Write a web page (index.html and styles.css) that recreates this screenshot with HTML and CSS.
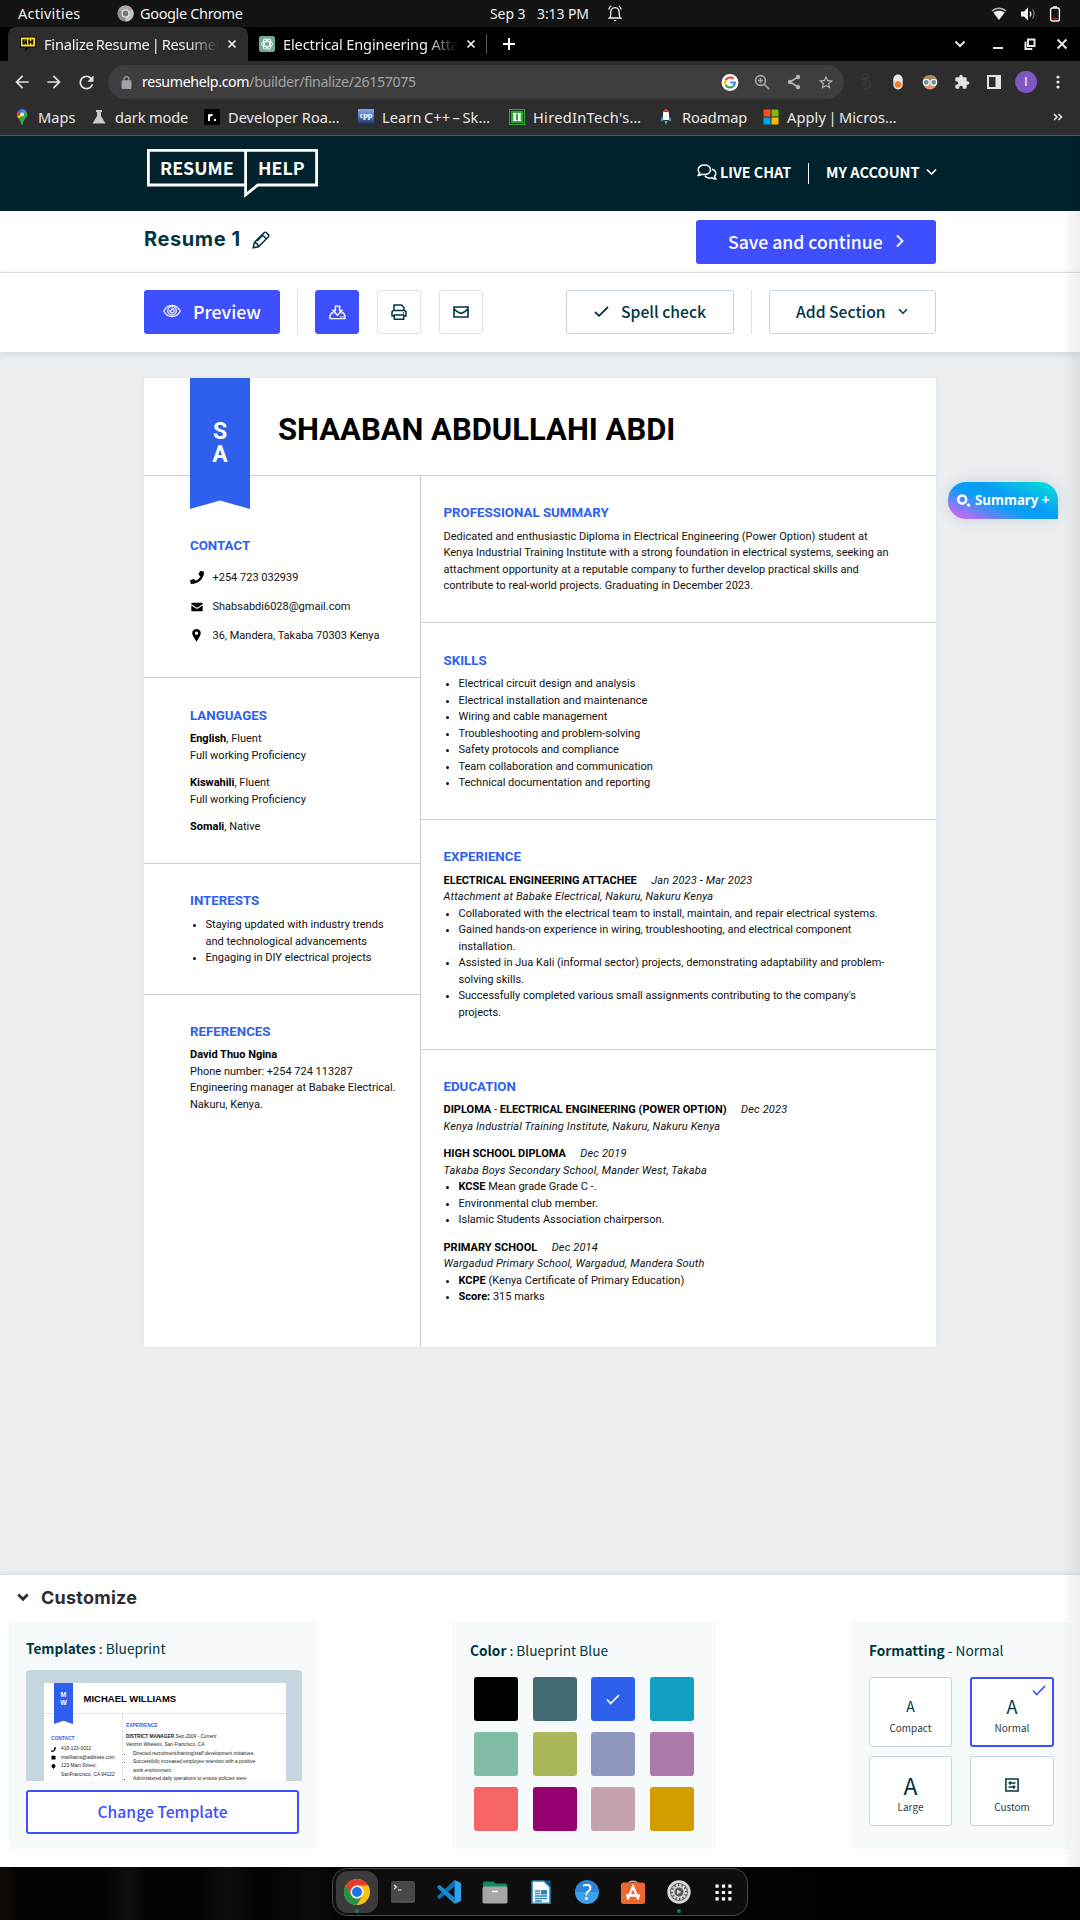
FILE: index.html
```html
<!DOCTYPE html>
<html lang="en">
<head>
<meta charset="utf-8">
<title>Finalize Resume | ResumeHelp</title>
<link rel="stylesheet" href="styles.css">
</head>
<body>
<div class="desktop">
  <header class="topbar">
    <div class="topbar-left">
      <span class="activities">Activities</span>
      <svg class="gray-chrome" width="17" height="17" viewBox="0 0 20 20"><circle cx="10" cy="10" r="9.5" fill="#8d8d8d"/><path d="M10 10 1.8 5.2A9.5 9.5 0 0 1 18.2 5.2Z" fill="#a9a9a9"/><path d="M10 10 18.2 5.2A9.5 9.5 0 0 1 10 19.5Z" fill="#c4c4c4"/><circle cx="10" cy="10" r="4.6" fill="#eee"/><circle cx="10" cy="10" r="3.4" fill="#777"/></svg>
      <span class="appname">Google Chrome</span>
    </div>
    <div class="clock"><span>Sep 3</span><span>3:13 PM</span>
      <svg width="14" height="17" viewBox="0 0 14 17" fill="none" stroke="#f2f2f2" stroke-width="1.3"><path d="M1.5 13h11c-1.300-1-1.300-2.500-1.300-5.500C11.200 4.500 9.800 2.600 7 2.600S2.800 4.500 2.800 7.500C2.800 10.500 2.800 12 1.500 13zM.7 4.500C1 3 1.800 1.800 3.200 1M13.300 4.500C13 3 12.200 1.800 10.800 1"/><path d="M5.300 15h3.400L7 16.500z" fill="#f2f2f2" stroke="none"/></svg>
    </div>
    <div class="tray">
      <svg width="16" height="14" viewBox="0 0 16 14"><path d="M1 4C5 .2 11 .2 15 4" fill="none" stroke="#bbb" stroke-width="1.500"/><path d="M2.300 5.600C5.600 3 10.400 3 13.700 5.600L8 13z" fill="#f2f2f2"/></svg>
      <svg width="16" height="14" viewBox="0 0 16 14"><path d="M1 4.500h3L8 .5v13L4 9.500H1z" fill="#f2f2f2"/><path d="M10 4.500c1 1.500 1 3.500 0 5" fill="none" stroke="#eee" stroke-width="1.300"/><path d="M12.500 2.500c2 2.700 2 6.300 0 9" fill="none" stroke="#777" stroke-width="1.200"/></svg>
      <svg width="12" height="16" viewBox="0 0 12 16"><rect x="1.600" y="2" width="8.800" height="13" rx="1.800" fill="none" stroke="#f2f2f2" stroke-width="1.400"/><path d="M4 1h4" stroke="#f2f2f2" stroke-width="1.600"/><path d="M3.200 12.600h5.600" stroke="#c01c1c" stroke-width="1.600"/></svg>
    </div>
  </header>

  <div class="tabstrip">
    <div class="tab tab-active">
      <svg width="16" height="16" viewBox="0 0 16 16"><path d="M0 .5h16v11.500H8.500L5 16v-4H0z" fill="#111"/><path d="M1 1.500h14v9H1z" fill="#f9d71c"/><path d="M2.500 3.500h4.500v3L7.500 8.500H6L5.200 7v1.500H2.500zM8.300 3.500h1.800v1.700h1.200V3.500h1.900v5h-1.900V6.800h-1.200v1.700H8.300z" fill="#111"/><path d="M4.200 4.600h1.200v.9H4.200z" fill="#f9d71c"/></svg>
      <span class="tab-title">Finalize Resume | ResumeHelp</span>
      <svg class="tab-close" width="10" height="10" viewBox="0 0 10 10"><path d="M1.500 1.500l7 7M8.500 1.500l-7 7" stroke="#f0f0f0" stroke-width="1.700"/></svg>
    </div>
    <div class="tab tab-second">
      <svg width="16" height="16" viewBox="0 0 16 16"><rect width="16" height="16" rx="2.500" fill="#74aa9c"/><g fill="none" stroke="#fff" stroke-width=".9"><ellipse cx="8" cy="8" rx="5.600" ry="2.700"/><ellipse cx="8" cy="8" rx="5.600" ry="2.700" transform="rotate(60 8 8)"/><ellipse cx="8" cy="8" rx="5.600" ry="2.700" transform="rotate(120 8 8)"/></g></svg>
      <span class="tab-title">Electrical Engineering Attachment</span>
      <svg class="tab-close" width="10" height="10" viewBox="0 0 10 10"><path d="M1.500 1.500l7 7M8.500 1.500l-7 7" stroke="#f0f0f0" stroke-width="1.700"/></svg>
    </div>
    <span class="tab-sep"></span>
    <svg class="tab-plus" width="12" height="12" viewBox="0 0 12 12"><path d="M6 0v12M0 6h12" stroke="#fff" stroke-width="2"/></svg>
    <div class="winctl">
      <svg width="12" height="10" viewBox="0 0 12 10"><path d="M1.500 2.500 6 7l4.500-4.500" fill="none" stroke="#e6e6e6" stroke-width="2"/></svg>
      <svg width="12" height="12" viewBox="0 0 12 12"><path d="M1 10h10" stroke="#e6e6e6" stroke-width="2"/></svg>
      <svg width="12" height="12" viewBox="0 0 12 12" fill="none" stroke="#e6e6e6" stroke-width="2"><path d="M4 1.500h6.500V8H4zM1.500 3.500V11h6.800"/></svg>
      <svg width="12" height="12" viewBox="0 0 12 12"><path d="M1.500 1.500l9 9M10.500 1.500l-9 9" stroke="#e6e6e6" stroke-width="2"/></svg>
    </div>
  </div>

  <div class="toolbar">
    <div class="nav">
      <svg class="cell" width="20" height="20" viewBox="0 0 24 24" fill="#dfdfdf"><path d="M20 11H7.830l5.590-5.590L12 4l-8 8 8 8 1.410-1.410L7.830 13H20v-2z"/></svg>
      <svg class="cell" width="20" height="20" viewBox="0 0 24 24" fill="#dfdfdf"><path d="M4 11h12.170l-5.590-5.590L12 4l8 8-8 8-1.410-1.410L16.170 13H4v-2z"/></svg>
      <svg class="cell" width="21" height="21" viewBox="0 0 24 24" fill="#dfdfdf"><path d="M17.650 6.350A7.958 7.958 0 0 0 12 4c-4.420 0-7.990 3.580-7.990 8s3.570 8 7.990 8c3.730 0 6.840-2.550 7.730-6h-2.080A5.990 5.990 0 0 1 12 18c-3.310 0-6-2.690-6-6s2.690-6 6-6c1.660 0 3.140.69 4.220 1.780L13 11h7V4l-2.350 2.350z"/></svg>
    </div>
    <div class="omnibox">
      <svg width="13" height="13" viewBox="3 1 18 21" fill="#9fa3a8"><path d="M18 8h-1V6c0-2.760-2.240-5-5-5S7 3.240 7 6v2H6c-1.100 0-2 .9-2 2v10c0 1.100.9 2 2 2h12c1.100 0 2-.9 2-2V10c0-1.100-.9-2-2-2zM9 6c0-1.660 1.340-3 3-3s3 1.340 3 3v2H9V6z"/></svg>
      <span class="url"><b>resumehelp.com</b>/builder/finalize/26157075</span>
      <div class="omni-icons">
        <svg width="32" height="17" viewBox="-8 0 34 18"><circle cx="9" cy="9" r="9" fill="#fff"/><g fill="none" stroke-width="2.300"><path d="M12.800 5.200A5.300 5.300 0 0 0 4.400 6.400" stroke="#ea4335"/><path d="M4.400 6.400a5.300 5.300 0 0 0 0 5.200" stroke="#fbbc05"/><path d="M4.400 11.600a5.300 5.300 0 0 0 8.200 1.300" stroke="#34a853"/><path d="M12.600 12.900A5.200 5.200 0 0 0 14.200 9H9.200" stroke="#4285f4"/></g></svg>
        <svg width="32" height="18" viewBox="-7 0 32 18" fill="none" stroke="#a9a9a9" stroke-width="1.600"><circle cx="7.500" cy="7.500" r="4.900"/><path d="M11.200 11.200l5 5M5 7.500h5M7.500 5v5"/></svg>
        <svg width="32" height="16" viewBox="-8 0 32 16"><path d="M12 3 4 8l8 5" fill="none" stroke="#b5b5b5" stroke-width="1.500"/><g fill="#b5b5b5"><circle cx="12" cy="3" r="2.200"/><circle cx="4" cy="8" r="2.200"/><circle cx="12" cy="13" r="2.200"/></g></svg>
        <svg width="32" height="17" viewBox="-10.600 0 45.200 24" fill="#b5b5b5"><path d="M22 9.240l-7.190-.62L12 2 9.190 8.630 2 9.240l5.460 4.730L5.820 21 12 17.270 18.180 21l-1.630-7.030L22 9.240zM12 15.400l-3.760 2.270 1-4.280-3.320-2.880 4.380-.38L12 6.100l1.710 4.040 4.380.38-3.320 2.880 1 4.280L12 15.400z"/></svg>
      </div>
    </div>
    <div class="ext">
      <svg width="32" height="18" viewBox="-7 0 32 18" fill="none" stroke="#383838" stroke-width="1.500"><circle cx="8" cy="4" r="3"/><path d="M8 4v8l-3-1M8 8l5 1v3l-2 4H7"/></svg>
      <svg width="32" height="16" viewBox="-8 0 32 16"><rect x="3.300" y=".5" width="9.400" height="15" rx="4.700" fill="#e8e8e8"/><circle cx="8" cy="10.500" r="3.300" fill="#f57c1f"/></svg>
      <svg width="32" height="16" viewBox="-8 0 32 16"><circle cx="8" cy="8.500" r="7" fill="#d99a6c"/><path d="M1 7.500C1 3 4 1 8 1s7 2 7 6.500z" fill="#a8875c"/><circle cx="4.300" cy="8.300" r="3" fill="#5d93a3" stroke="#f1f1f1" stroke-width="1.300"/><circle cx="11.700" cy="8.300" r="3" fill="#5d93a3" stroke="#f1f1f1" stroke-width="1.300"/></svg>
      <svg width="32" height="16" viewBox="-12 0 48 24" fill="#e3e3e3"><path d="M20.500 11H19V7c0-1.100-.9-2-2-2h-4V3.500C13 2.120 11.880 1 10.500 1S8 2.120 8 3.500V5H4c-1.100 0-1.990.9-1.990 2v3.800H3.500c1.490 0 2.700 1.210 2.700 2.700s-1.210 2.700-2.700 2.700H2V20c0 1.100.9 2 2 2h3.800v-1.500c0-1.490 1.210-2.700 2.700-2.700 1.490 0 2.700 1.210 2.700 2.700V22H17c1.100 0 2-.9 2-2v-4h1.500c1.380 0 2.500-1.120 2.500-2.500S21.880 11 20.500 11z"/></svg>
      <svg width="32" height="14" viewBox="-9 0 32 14"><path d="M1 1h12v12H1z" fill="none" stroke="#e3e3e3" stroke-width="2"/><path d="M8.500 1H13v12H8.500z" fill="#e3e3e3"/></svg>
      <span class="avatar-cell"><span class="avatar">I</span></span>
      <svg width="32" height="14" viewBox="-9 0 32 14" fill="#e3e3e3"><circle cx="7" cy="2" r="1.600"/><circle cx="7" cy="7" r="1.600"/><circle cx="7" cy="12" r="1.600"/></svg>
    </div>
  </div>

  <div class="bookmarks">
    <span class="bm bm-maps"><svg width="16" height="16" viewBox="0 0 16 16"><path d="M8 0a5.400 5.400 0 0 0-4.200 2L8 5.500z" fill="#1a73e8"/><path d="M3.800 2A5.300 5.300 0 0 0 2.900 7L6.500 4.200z" fill="#ea4335"/><path d="M2.900 7c.5 1.200 1.300 2 2.100 3l5-6z" fill="#fbbc04"/><path d="M8 0a5.400 5.400 0 0 1 4.200 2L9.500 5.200 6.500 4.200z" fill="#4285f4"/><path d="M12.200 2c2 3 1 5.500-.8 7.500-1.600 2-2.200 3.500-2.700 5.800-.2.800-1.200.8-1.400 0C7 13.600 6.300 12 5 10z" fill="#34a853"/><circle cx="8" cy="5.400" r="1.900" fill="#fff"/></svg>Maps</span>
    <span class="bm bm-dark"><svg width="14" height="16" viewBox="0 0 14 16" fill="#c8cacd"><path d="M4 1h6v2H9v4l4.500 7.500H.5L5 7V3H4z"/></svg>dark mode</span>
    <span class="bm bm-dev"><svg width="16" height="16" viewBox="0 0 16 16"><rect width="16" height="16" rx="1.500" fill="#000"/><path d="M5 12V5.200" fill="none" stroke="#fff" stroke-width="2"/><path d="M5.200 8.200C5.600 6.500 6.800 5.800 8.600 6.200" fill="none" stroke="#fff" stroke-width="1.900"/><circle cx="11" cy="11" r="1.200" fill="#fff"/></svg>Developer Roa…</span>
    <span class="bm bm-cpp"><span class="cpp">cpp</span>Learn C++ – Sk…</span>
    <span class="bm bm-hired"><svg width="16" height="16" viewBox="0 0 16 16"><rect x=".5" y=".5" width="15" height="15" fill="#123d14" stroke="#2fa53a"/><rect x="2" y="2" width="12" height="12" fill="#2fa53a"/><path d="M4 4h3.600v1H7v6h.6v1H4v-1h.4V5H4zM8.400 4H12v1h-.4v6h.4v1H8.400v-1H9V5h-.6z" fill="#fff"/></svg>HiredInTech's…</span>
    <span class="bm bm-road"><svg width="12" height="16" viewBox="0 0 12 16"><path d="M6 0c2 1.500 3 3 3 5v6H3V5c0-2 1-3.500 3-5z" fill="#fff"/><path d="M6 0c1.300 1 2.100 1.900 2.600 3H3.400C3.900 1.900 4.700 1 6 0z" fill="#d22"/><path d="M3 7 1 10v2h2zM9 7l2 3v2H9z" fill="#29a3e0"/><path d="M4.500 12h3L6 16z" fill="#3fd13f"/></svg>Roadmap</span>
    <span class="bm bm-ms"><svg width="16" height="16" viewBox="0 0 16 16"><path d="M.5.5h7v7h-7z" fill="#ff4f1f"/><path d="M8.500.5h7v7h-7z" fill="#7fba00"/><path d="M.5 8.500h7v7h-7z" fill="#00a4ef"/><path d="M8.500 8.500h7v7h-7z" fill="#ffb900"/></svg>Apply | Micros…</span>
    <svg class="bm-more" width="10" height="8" viewBox="0 0 10 8"><path d="M1 1l3 3-3 3M5.500 1l3 3-3 3" fill="none" stroke="#e6e6e6" stroke-width="1.500"/></svg>
  </div>

  <main class="page">
    <div class="sitehead">
      <div class="logo">
        <svg class="logo-frame" width="171" height="49" viewBox="0 0 171 49" fill="none" stroke="#fff" stroke-width="2.800"><path d="M98.600 1.300H1.400v34.700h97.200M98.600 1.300h71v34.700h-58.800L98.600 45.900z"/></svg>
        <span class="logo-a">RESUME</span><span class="logo-b">HELP</span>
      </div>
      <div class="sitenav">
        <svg width="20" height="17" viewBox="0 0 20 17" fill="none" stroke="#fff" stroke-width="1.500"><path d="M7.300 1C3.700 1 1.200 3 1.200 5.700c0 1.300.6 2.400 1.400 3.200-.2 1-.8 1.800-1.400 2.500 1.500 0 2.800-.5 3.700-1.200.7.2 1.500.3 2.400.3 3.600 0 6.200-2 6.200-4.800S10.900 1 7.300 1z"/><path d="M15 5.200c2.300.7 3.800 2.300 3.800 4.200 0 1.300-.6 2.300-1.400 3.100.2 1 .8 1.800 1.400 2.500-1.500 0-2.800-.5-3.700-1.200-3 .8-6-.2-7.300-2"/></svg>
        <span class="nav-chat">LIVE CHAT</span>
        <span class="nav-sep"></span>
        <span class="nav-acct">MY ACCOUNT</span>
        <svg width="11" height="8" viewBox="0 0 11 8"><path d="M1 1.500 5.500 6 10 1.500" fill="none" stroke="#fff" stroke-width="1.700"/></svg>
      </div>
    </div>

    <div class="titlebar">
      <h1>Resume 1</h1>
      <svg class="pencil" width="18" height="18" viewBox="0 0 18 18" fill="none" stroke="#003642" stroke-width="1.500"><path d="M1.200 16.800 2.300 11.500 12 1.800a1.700 1.700 0 0 1 2.400 0l1.800 1.800a1.700 1.700 0 0 1 0 2.400L6.500 15.700zM10.200 3.700l4.100 4.100M2.300 11.500c2 .3 3.800 2 4.200 4.200M5 10l6-6"/></svg>
      <button class="btn btn-save">Save and continue<svg width="8" height="14" viewBox="0 0 8 14"><path d="M1 1.500 6.500 7 1 12.500" fill="none" stroke="#fff" stroke-width="1.800"/></svg></button>
    </div>

    <div class="actions">
      <button class="btn btn-preview"><svg width="18" height="14" viewBox="0 0 18 14" fill="none" stroke="#fff" stroke-width="1.200"><path d="M.8 7C4.500-.6 13.500-.6 17.200 7 13.500 14.400 4.500 14.400.8 7z"/><circle cx="9" cy="6.800" r="4.300"/><path d="M9 4.600a2.200 2.200 0 1 1-2.200 2.200c0 0 1.700.8 2.200-2.200z"/></svg>Preview</button>
      <span class="vsep"></span>
      <button class="sq sq-fill"><svg width="17" height="15" viewBox="0 0 18 16" fill="none" stroke="#fff" stroke-width="1.500"><path d="M6.800 1.200h4.400v4.600h2.600L9 10.800 4.200 5.800h2.600zM4.700 8.500H2.600L1 11.500v3h16v-3l-1.600-3h-2.100M12 12.600h1.200M14.400 12.600h1.200"/></svg></button>
      <button class="sq"><svg width="16" height="16" viewBox="0 0 16 16" fill="none" stroke="#003642" stroke-width="1.500"><path d="M3 6.500V1h7.500L13 3.500v3M3 12H1V8.500c0-1 .8-2 2-2h10c1.200 0 2 1 2 2V12h-2M3.300 11h9.400v4.200H3.300zM12 9h1"/></svg></button>
      <button class="sq"><svg width="16" height="12" viewBox="0 0 16 12" fill="none" stroke="#003642" stroke-width="1.600"><path d="M1 1h14v10H1zM1 3c3 2.300 5 4.300 7 4.300s4-2 7-4.300"/></svg></button>
      <button class="obtn btn-spell"><svg width="15" height="11" viewBox="0 0 15 11"><path d="M1 6l4 3.800L14 1" fill="none" stroke="#003642" stroke-width="1.800"/></svg>Spell check</button>
      <span class="vsep"></span>
      <button class="obtn btn-add">Add Section<svg width="10" height="7" viewBox="0 0 10 7"><path d="M1 1.200l4 4 4-4" fill="none" stroke="#003642" stroke-width="1.500"/></svg></button>
    </div>

    <div class="canvas">
      <article class="sheet">
        <header class="sheet-head">
          <div class="ribbon"><span>S</span><span>A</span></div>
          <h2>SHAABAN ABDULLAHI ABDI</h2>
        </header>
        <div class="cols">
          <div class="col-left">
            <section class="s-contact">
              <h3>CONTACT</h3>
              <p class="ct"><svg width="14" height="13" viewBox="0 0 512 512" preserveAspectRatio="none"><path d="M493.400 24.600l-104-24c-11.300-2.600-22.900 3.300-27.500 13.900l-48 112c-4.200 9.800-1.400 21.300 6.900 28l60.600 49.600c-36 76.700-98.900 140.500-177.200 177.200l-49.600-60.600c-6.800-8.300-18.200-11.100-28-6.900l-112 48C3.900 366.500-2 378.100.6 389.400l24 104C27.100 504.200 36.700 512 48 512c256.100 0 464-207.500 464-464 0-11.200-7.700-20.900-18.600-23.400z"/></svg>+254 723 032939</p>
              <p class="ct"><svg width="14" height="10" viewBox="0 0 14 10"><path d="M1.300 2.200V2c0-.8.500-1.300 1.200-1.300h9c.7 0 1.200.5 1.200 1.300v.2L7 5.700zM1.300 3.500 7 7l5.700-3.500v4.700c0 .6-.5 1.100-1.200 1.100h-9c-.7 0-1.200-.5-1.200-1.100z"/></svg>Shabsabdi6028@gmail.com</p>
              <p class="ct"><svg width="14" height="13" viewBox="0 0 14 13"><path fill-rule="evenodd" d="M6.500 0C4 0 2.200 1.800 2.200 4.200 2.200 6.500 4.500 9 6.500 12.700 8.500 9 10.800 6.500 10.800 4.200 10.800 1.800 9 0 6.500 0zm0 2.600a1.600 1.600 0 1 1 0 3.200 1.600 1.600 0 0 1 0-3.200z"/></svg>36, Mandera, Takaba 70303 Kenya</p>
            </section>
            <section class="s-lang">
              <h3>LANGUAGES</h3>
              <p><b>English</b>, Fluent<br>Full working Proficiency</p>
              <p><b>Kiswahili</b>, Fluent<br>Full working Proficiency</p>
              <p><b>Somali</b>, Native</p>
            </section>
            <section class="s-int">
              <h3>INTERESTS</h3>
              <ul><li>Staying updated with industry trends and technological advancements</li><li>Engaging in DIY electrical projects</li></ul>
            </section>
            <section class="s-ref">
              <h3>REFERENCES</h3>
              <p><b>David Thuo Ngina</b><br>Phone number: +254 724 113287<br>Engineering manager at Babake Electrical.<br>Nakuru, Kenya.</p>
            </section>
          </div>
          <div class="col-right">
            <section class="s-sum">
              <h3>PROFESSIONAL SUMMARY</h3>
              <p>Dedicated and enthusiastic Diploma in Electrical Engineering (Power Option) student at Kenya Industrial Training Institute with a strong foundation in electrical systems, seeking an attachment opportunity at a reputable company to further develop practical skills and contribute to real-world projects. Graduating in December 2023.</p>
            </section>
            <section class="s-skills">
              <h3>SKILLS</h3>
              <ul><li>Electrical circuit design and analysis</li><li>Electrical installation and maintenance</li><li>Wiring and cable management</li><li>Troubleshooting and problem-solving</li><li>Safety protocols and compliance</li><li>Team collaboration and communication</li><li>Technical documentation and reporting</li></ul>
            </section>
            <section class="s-exp">
              <h3>EXPERIENCE</h3>
              <p><b>ELECTRICAL ENGINEERING ATTACHEE</b><i class="date">Jan 2023 - Mar 2023</i><br><i>Attachment at Babake Electrical, Nakuru, Nakuru Kenya</i></p>
              <ul><li>Collaborated with the electrical team to install, maintain, and repair electrical systems.</li><li>Gained hands-on experience in wiring, troubleshooting, and electrical component installation.</li><li>Assisted in Jua Kali (informal sector) projects, demonstrating adaptability and problem-solving skills.</li><li>Successfully completed various small assignments contributing to the company's projects.</li></ul>
            </section>
            <section class="s-edu">
              <h3>EDUCATION</h3>
              <div class="entry"><p><b>DIPLOMA</b> - <b>ELECTRICAL ENGINEERING (POWER OPTION)</b><i class="date">Dec 2023</i><br><i>Kenya Industrial Training Institute, Nakuru, Nakuru Kenya</i></p></div>
              <div class="entry"><p><b>HIGH SCHOOL DIPLOMA</b><i class="date">Dec 2019</i><br><i>Takaba Boys Secondary School, Mander West, Takaba</i></p>
              <ul><li><b>KCSE</b> Mean grade Grade C -.</li><li>Environmental club member.</li><li>Islamic Students Association chairperson.</li></ul></div>
              <div class="entry"><p><b>PRIMARY SCHOOL</b><i class="date">Dec 2014</i><br><i>Wargadud Primary School, Wargadud, Mandera South</i></p>
              <ul><li><b>KCPE</b> (Kenya Certificate of Primary Education)</li><li><b>Score:</b> 315 marks</li></ul></div>
            </section>
          </div>
        </div>
      </article>
    </div>

    <div class="customize">
      <div class="cz-head"><svg width="12" height="9" viewBox="0 0 12 9"><path d="M1.300 1.500 6 6.300l4.700-4.800" fill="none" stroke="#2d2d2d" stroke-width="2.800"/></svg><span>Customize</span></div>
      <div class="cz-cards">
        <div class="card card-tpl">
          <h4><b>Templates</b> : Blueprint</h4>
          <div class="thumb">
            <div class="mini">
              <div class="mini-head"><div class="mini-ribbon"><span>M</span><span>W</span></div><span class="mini-name">MICHAEL WILLIAMS</span></div>
              <div class="mini-cols">
                <div class="mini-left">
                  <em>CONTACT</em>
                  <div class="mrow"><svg width="5" height="5" viewBox="0 0 5 5"><path d="M3.500 0 5 .5C5 3 3 5 .5 5L0 3.500l1.200-.3.6.5C2.600 3.200 3.200 2.600 3.500 1.800L3 1.200z"/></svg>415-123-0012</div>
                  <div class="mrow"><svg width="5" height="5" viewBox="0 0 5 5"><path d="M.5.700h4v3.800h-4z"/></svg>mwilliams@address.com</div>
                  <div class="mrow"><svg width="5" height="5" viewBox="0 0 5 5"><path d="M2.500 0a2 2 0 0 1 2 2c0 1-1 1.700-2 3-1-1.300-2-2-2-3a2 2 0 0 1 2-2z"/></svg>123 Main Street,</div>
                  <div class="mrow mrow-last">SanFrancisco, CA 94122</div>
                </div>
                <div class="mini-right">
                  <em>EXPERIENCE</em>
                  <div><b>DISTRICT MANAGER</b> <i>Sep 2009 - Current</i></div>
                  <div><i>Verizon Wireless, San Francisco, CA</i></div>
                  <ul><li>Directed recruitment/training/staff development initiatives.</li><li>Successfully increased employee retention with a positive<br>work environment.</li><li>Administered daily operations to ensure policies were</li></ul>
                </div>
              </div>
            </div>
          </div>
          <button class="btn-change">Change Template</button>
        </div>
        <div class="card card-color">
          <h4><b>Color</b> : Blueprint Blue</h4>
          <div class="swatches">
            <span class="c1"></span><span class="c2"></span><span class="c3"><svg width="14" height="11" viewBox="0 0 14 11"><path d="M1 5.500l3.700 4L13 1" fill="none" stroke="#fff" stroke-width="1.700"/></svg></span><span class="c4"></span>
            <span class="c5"></span><span class="c6"></span><span class="c7"></span><span class="c8"></span>
            <span class="c9"></span><span class="c10"></span><span class="c11"></span><span class="c12"></span>
          </div>
        </div>
        <div class="card card-fmt">
          <h4><b>Formatting</b> - Normal</h4>
          <div class="fmts">
            <div class="fmt"><span class="a a1">A</span><span>Compact</span></div>
            <div class="fmt fmt-on"><svg class="tick" width="14" height="11" viewBox="0 0 14 11"><path d="M1 5.500l3.700 4L13 1" fill="none" stroke="#3d4fff" stroke-width="1.700"/></svg><span class="a a2">A</span><span>Normal</span></div>
            <div class="fmt"><span class="a a3">A</span><span>Large</span></div>
            <div class="fmt"><span class="a"><svg width="14" height="14" viewBox="0 0 14 14" fill="none" stroke="#003642" stroke-width="1.500"><path d="M.9.9h12.200v12.200H.9zM3.500 5h7M3.500 9h7M5.200 3.300v3.400M8.800 7.300v3.400"/></svg></span><span>Custom</span></div>
          </div>
        </div>
      </div>
    </div>

    <div class="edge-shadow"></div>
    <div class="summary-pill"><svg width="14" height="13" viewBox="0 0 14 13"><circle cx="5.200" cy="5.500" r="4" fill="none" stroke="#fff" stroke-width="2.500"/><circle cx="11.600" cy="11" r="1.700" fill="#fff"/></svg>Summary +</div>
  </main>

  <footer class="dockbar">
    <div class="dock">
      <span class="di di-on"><svg width="26" height="26" viewBox="0 0 26 26"><circle cx="13" cy="13" r="13" fill="#fbc116"/><path d="M13 6.500h11.260A13 13 0 0 0 1.740 6.500L7.400 16.200z" fill="#e33b2e"/><path d="M1.740 6.500A13 13 0 0 0 13 26l5.600-9.700a6.500 6.500 0 0 1-11.200 0z" fill="#229342"/><circle cx="13" cy="13" r="6.500" fill="#fff"/><circle cx="13" cy="13" r="5" fill="#1a73e8"/></svg></span>
      <span class="di"><svg width="24" height="22" viewBox="0 0 24 22"><rect width="24" height="22" rx="2.500" fill="#484848"/><path d="M.5 20.500h23" stroke="#5a5a5a"/><path d="M3 4l2.500 2L3 8M7 9h3.500" fill="none" stroke="#eee" stroke-width="1.100"/></svg></span>
      <span class="di"><svg width="24" height="24" viewBox="0 0 24 24"><path d="M17.500 0 1 15.500l-1 1.500 2 2 1.500-.4L17.500 6.500z" fill="#0a6fb8"/><path d="M17.500 24 1 8.500 0 7l2-2 1.500.4L17.500 17.500z" fill="#1b8ad3"/><path d="M17.500 0 24 3v18l-6.500 3z" fill="#2aa4f0"/></svg></span>
      <span class="di"><svg width="26" height="23" viewBox="0 0 26 23"><path d="M1 2C1 1 1.700.5 2.500.5h9L14 2.500h9.500c.8 0 1.500.7 1.500 1.500v4H1z" fill="#0f8a5f"/><rect x=".5" y="5.500" width="25" height="17" rx="1.800" fill="#a6a6a6"/><path d="M10 10.500h6" stroke="#fff" stroke-width="1.600"/></svg></span>
      <span class="di"><svg width="20" height="24" viewBox="0 0 20 24"><path d="M2 1h11l6 6v16.300H1V2a1 1 0 0 1 1-1z" fill="#fff" stroke="#2387bd" stroke-width="1.600"/><path d="M14 .5h5.500V6z" fill="#0f5e8c"/><path d="M4 11h5M4 13.500h5M4 16h12M4 18.500h12M4 21h7" stroke="#2387bd" stroke-width="1.300"/><path d="M10 10h6v4.500h-6z" fill="#2387bd"/></svg></span>
      <span class="di"><span class="help">?</span></span>
      <span class="di"><svg width="24" height="24" viewBox="0 0 24 24"><path d="M8 3.500C8 .5 16 .5 16 3.500" fill="none" stroke="#d8b48a" stroke-width="1.500"/><rect y="2.500" width="24" height="21.500" rx="2.500" fill="#ef6730"/><path d="M6.500 19.500 12 6.500l5.500 13M5 15.500h14" fill="none" stroke="#fff" stroke-width="2.300"/></svg></span>
      <span class="di di-run"><svg width="24" height="24" viewBox="0 0 24 24"><circle cx="12" cy="12" r="11.700" fill="#d9d9d9"/><circle cx="12" cy="12" r="9" fill="#565656"/><circle cx="12" cy="12" r="6.800" fill="none" stroke="#d9d9d9" stroke-width="2.400" stroke-dasharray="2.300 1.260"/><circle cx="12" cy="12" r="5.300" fill="none" stroke="#d9d9d9" stroke-width="1.500"/><path d="M10 9.500l4.500 2.500-4.500 2.500z" fill="#d9d9d9"/></svg></span>
      <span class="di di-apps"><svg width="17" height="17" viewBox="0 0 17 17" fill="#fff"><path d="M.5.500h3.200v3.200H.5zM6.900.5h3.200v3.200H6.900zM13.300.5h3.200v3.200h-3.200zM.5 6.900h3.200v3.200H.5zM6.900 6.900h3.200v3.200H6.900zM13.300 6.900h3.200v3.200h-3.200zM.5 13.300h3.200v3.200H.5zM6.900 13.300h3.200v3.200H6.900zM13.300 13.300h3.200v3.200h-3.200z"/></svg></span>
    </div>
  </footer>
</div>
</body>
</html>
```
FILE: styles.css
```css
* { box-sizing: border-box; }
body { margin: 0; font-family: "Noto Sans CJK SC", "Noto Sans", sans-serif; }
h1, h2, h3, h4, p, ul { margin: 0; padding: 0; font-weight: normal; }
button { font-family: inherit; padding: 0; margin: 0; white-space: nowrap; }
svg { display: block; flex: none; }
.desktop { width: 1080px; height: 1920px; overflow: hidden; display: flex; flex-direction: column; background: #000; }

/* GNOME top bar */
.topbar { height: 27px; background: #131313; display: grid; grid-template-columns: 490px 1fr auto; align-items: center; color: #f0f0f0; font: 14.500px/27px "Noto Sans", sans-serif; white-space: nowrap; }
.topbar-left { display: flex; align-items: center; padding-left: 18px; }
.activities { width: 99px; letter-spacing: .2px; }
.appname { margin-left: 6px; letter-spacing: -.35px; }
.clock { display: flex; align-items: center; font-size: 14px; letter-spacing: -.1px; }
.clock span:first-child { width: 47px; }
.clock svg { margin-left: 19px; }
.tray { display: flex; align-items: center; gap: 13px; padding-right: 19px; }

/* Browser chrome */
.tabstrip { height: 34px; background: #000; display: flex; align-items: center; color: #f0f0f0; font: 14.600px/34px "Noto Sans", sans-serif; }
.tab { display: flex; align-items: center; height: 34px; }
.tab-active { margin-left: 8px; width: 240px; padding-left: 12px; background: #2d2d2d; border-radius: 8px 8px 0 0; }
.tab-second { width: 237px; padding-left: 11px; }
.tab-title { width: 175px; margin-left: 8px; overflow: hidden; white-space: nowrap; letter-spacing: -.15px; -webkit-mask-image: linear-gradient(90deg, #000 82%, transparent); mask-image: linear-gradient(90deg, #000 82%, transparent); }
.tab-active .tab-title { word-spacing: -1.500px; letter-spacing: -.2px; }
.tab-close { margin-left: 8px; }
.tab-sep { width: 1px; height: 20px; background: #555; margin-left: 1px; }
.tab-plus { margin-left: 16px; }
.winctl { margin-left: auto; display: flex; align-items: center; gap: 20px; padding-right: 12px; }
.winctl svg:first-child { margin-right: 6px; }
.toolbar { height: 42px; background: #2d2d2d; display: flex; align-items: center; }
.nav { display: flex; gap: 12px; padding-left: 12px; width: 108px; }
.omnibox { width: 736px; height: 34px; border-radius: 17px; background: #3e3e3e; display: flex; align-items: center; padding: 0 2px 0 12px; }
.url { margin-left: 9px; color: #a3a3a3; font: 14.200px/34px "Noto Sans", sans-serif; letter-spacing: -.34px; }
.url b { font-weight: 400; color: #fff; }
.omni-icons { display: flex; align-items: center; margin-left: auto; }
.ext { display: flex; align-items: center; margin-left: 6px; }
.avatar-cell { width: 32px; display: flex; justify-content: center; }
.avatar { width: 22px; height: 22px; border-radius: 50%; background: #7e57c2; color: #fff; font: 12px/22px Roboto, sans-serif; text-align: center; }
.bookmarks { height: 33px; background: #2d2d2d; border-bottom: 1px solid #565656; display: flex; align-items: center; padding: 0 17px 4px 14px; color: #e8e8e8; font: 14.600px/28px "Noto Sans", sans-serif; }
.bm { display: flex; align-items: center; gap: 8px; white-space: nowrap; flex: none; }
.bm-maps { width: 78px; }
.bm-dark { width: 112px; letter-spacing: -.15px; gap: 9px; }
.bm-dev { width: 154px; }
.bm-cpp { width: 151px; word-spacing: -1.500px; letter-spacing: .1px; }
.bm-hired { width: 151px; letter-spacing: .3px; }
.bm-road { width: 103px; gap: 10px; letter-spacing: -.1px; }
.bm-ms { word-spacing: -1.500px; letter-spacing: .1px; }
.bm-more { margin-left: auto; }
.cpp { width: 16px; height: 16px; background: linear-gradient(#86a3f2, #4a62a8 60%, #1b2547); color: #fff; font: bold 8.500px/13px "Liberation Serif", serif; text-align: center; letter-spacing: -.2px; word-spacing: 0; overflow: hidden; }

/* Page */
.page { position: relative; height: 1731px; display: flex; flex-direction: column; background: #ebeff2; color: #003642; }
.sitehead { height: 75px; background: #00222c; display: flex; justify-content: space-between; padding: 0 143px 0 144px; color: #fff; }
.logo { position: relative; margin: 13px 0 0 3px; width: 171px; height: 49px; display: flex; font-size: 17.800px; line-height: 36px; font-weight: 700; }
.logo-frame { position: absolute; left: 0; top: 0; }
.logo-a { width: 98px; padding-left: 13px; }
.logo-b { padding-left: 13px; }
.sitenav { display: flex; align-items: center; font-size: 14.500px; font-weight: 700; line-height: 20px; height: 72px; }
.nav-chat { margin-left: 3px; width: 71px; font-size: 14.300px; white-space: nowrap; padding-bottom: 1px; }
.nav-sep { width: 1px; height: 21px; background: #fff; margin: 2px 17px 0; }
.nav-acct { width: 94px; white-space: nowrap; margin-right: 6px; font-size: 14.600px; padding-bottom: 1px; }
.titlebar { height: 62px; background: #fff; border-bottom: 1px solid #dbe3e6; display: flex; padding: 0 144px; }
.titlebar h1 { font: 700 20px/28px Inter, sans-serif; letter-spacing: .6px; padding-top: 14px; width: 98px; white-space: nowrap; }
.pencil { margin: 20px 0 0 10px; }
.btn { border: 0; border-radius: 3px; background: #3d4fff; color: #fff; height: 44px; display: flex; align-items: center; font-weight: 500; font-size: 17.600px; }
.btn-save { width: 240px; margin: 9px 0 0 auto; padding: 0 0 2px 32px; gap: 13px; }
.actions { position: relative; z-index: 1; height: 79px; background: #fff; display: flex; padding: 17px 144px 0; box-shadow: 0 2px 8px rgba(0, 40, 60, .12); }
.btn-preview { width: 136px; padding: 0 0 2px 19px; gap: 12px; font-size: 17.700px; }
.vsep { width: 1px; height: 44px; background: #dbe3e6; margin: 0 17px; }
.sq { width: 44px; height: 44px; border: 1px solid #dbe3e6; border-radius: 3px; background: #fff; display: flex; align-items: center; justify-content: center; margin-right: 18px; }
.sq-fill { background: #3d4fff; border-color: #3d4fff; }
.obtn { height: 44px; background: #fff; border: 1px solid #c5d6de; border-radius: 3px; color: #003642; font-size: 15.700px; font-weight: 500; display: flex; align-items: center; }
.btn-spell { width: 168px; margin-left: auto; padding: 0 0 2px 27px; gap: 12px; }
.btn-add { width: 167px; padding: 0 0 2px 26px; gap: 12px; }

/* Resume sheet */
.canvas { flex: 1; padding: 26px 144px 0; }
.sheet { width: 792px; height: 969px; background: #fff; color: #111; font: 11px/16.500px Roboto, sans-serif; box-shadow: 0 0 3px rgba(0, 40, 60, .07); display: flex; flex-direction: column; }
.sheet b { color: #000; }
.sheet i { letter-spacing: .16px; }
.sheet-head { height: 98px; border-bottom: 1px solid #ccc; display: flex; }
.ribbon { width: 60px; height: 131px; margin-left: 46px; flex: none; background: #2f5fed; clip-path: polygon(0 0, 100% 0, 100% 100%, 50% 93.500%, 0 100%); color: #fff; font-weight: 700; font-size: 23px; line-height: 23px; display: flex; flex-direction: column; align-items: center; padding-top: 42px; }
.sheet h2 { font-weight: 700; font-size: 31px; line-height: 40px; color: #000; margin: 32px 0 0 28px; }
.cols { flex: 1; display: grid; grid-template-columns: 276px 1fr; }
.sheet h3 { color: #2f5fed; font-weight: 700; font-size: 13.300px; line-height: 16px; margin-bottom: 7px; }
.sheet section { border-bottom: 1px solid #ccc; }
.sheet section:last-child { border-bottom: 0; }
.sheet ul { padding-left: 15px; }
.col-left section { padding-left: 46px; padding-right: 22px; }
.col-left ul { padding-left: 15.500px; }
.col-right { border-left: 1px solid #ccc; }
.col-right section { padding-left: 22.500px; padding-right: 47px; }
.sheet .s-contact { height: 202px; padding-top: 62px; }
.s-contact h3 { margin-bottom: 9px; }
.ct { height: 29px; line-height: 29px; display: flex; align-items: center; gap: 8.500px; }
.sheet .s-lang { height: 186px; padding-top: 30px; }
.s-lang p { margin-bottom: 11px; }
.sheet .s-int { height: 131px; padding-top: 29px; }
.s-int h3 { margin-bottom: 8px; }
.sheet .s-ref { padding-top: 29px; }
.sheet .s-sum { height: 147px; padding-top: 28.500px; }
.s-sum h3 { margin-bottom: 8px; }
.sheet .s-skills { height: 197px; padding-top: 30px; }
.sheet .s-exp { height: 230px; padding-top: 29px; }
.s-exp h3 { margin-bottom: 7.500px; }
.sheet .s-edu { padding-top: 29px; }
.entry { margin-bottom: 11px; }
.date { margin-left: 14.500px; }

/* Customize panel */
.customize { height: 292px; background: #fff; box-shadow: 0 -1px 4px rgba(0, 40, 60, .1); }
.cz-head { display: flex; align-items: center; height: 47px; padding: 0 0 2px 17px; gap: 12px; color: #2d2d2d; font: 700 18px/24px Inter, sans-serif; letter-spacing: .25px; }
.cz-cards { display: flex; justify-content: space-between; padding: 0 9px; }
.card { height: 227px; background: #f6fafb; border-radius: 4px; }
.card h4 { font-size: 13.700px; line-height: 20px; white-space: nowrap; }
.card-tpl { width: 308px; padding: 16px 15px 0 17px; }
.card-color { width: 264px; padding: 18px 18px 0; }
.card-fmt { width: 220px; padding: 18px 17px 0 18px; }
.thumb { margin-top: 12px; width: 276px; height: 111px; background: #c6d6de; border-radius: 4px 4px 0 0; padding: 13px 16px 0 18px; overflow: hidden; }
.mini { height: 98px; background: #fff; color: #222; font: 4.800px/8.400px "Liberation Sans", sans-serif; white-space: nowrap; }
.mini-head { height: 31px; border-bottom: 1px solid #e4e4e4; display: flex; }
.mini-ribbon { width: 19px; height: 41px; flex: none; margin-left: 10px; background: #2f5fed; clip-path: polygon(0 0, 100% 0, 100% 100%, 50% 92%, 0 100%); color: #fff; font: bold 7px/8px "Liberation Sans", sans-serif; display: flex; flex-direction: column; align-items: center; padding-top: 8px; }
.mini-name { font-weight: 700; font-size: 9.500px; line-height: 32px; color: #000; margin-left: 10.500px; }
.mini-cols { display: flex; }
.mini em { display: block; font-style: normal; font-weight: 700; color: #2f5fed; font-size: 4.900px; }
.mini-left { width: 79px; height: 67px; border-right: 1px solid #e4e4e4; padding: 21px 0 0 7px; }
.mini-left em { margin-bottom: 1.500px; }
.mrow { display: flex; align-items: center; gap: 5px; height: 8.700px; letter-spacing: .03px; }
.mrow-last { padding-left: 10px; }
.mini-right { padding: 8px 0 0 3px; }
.mini-right em { margin-bottom: 2.500px; }
.mini-right ul { padding-left: 7px; }
.btn-change { display: block; width: 273px; height: 44px; margin-top: 9px; border: 2px solid #3d4fff; border-radius: 3px; background: #fff; color: #3d4fff; font-size: 15.700px; font-weight: 500; line-height: 38px; }
.swatches { display: grid; grid-template-columns: repeat(4, 44px); gap: 11px 14.600px; margin: 17px 0 0 4px; }
.swatches span { height: 44px; border-radius: 3px; display: flex; align-items: center; justify-content: center; }
.c1 { background: #000; } .c2 { background: #436973; } .c3 { background: #2f5fed; } .c4 { background: #109fc3; }
.c5 { background: #80bda4; } .c6 { background: #acb75b; } .c7 { background: #9097bf; } .c8 { background: #ab7bad; }
.c9 { background: #f66565; } .c10 { background: #950070; } .c11 { background: #c4a3ab; } .c12 { background: #d39d00; }
.fmts { display: grid; grid-template-columns: 83px 84px; gap: 9px 18px; margin-top: 17px; }
.fmt { position: relative; height: 70px; background: #fff; border: 1px solid #c5d6de; border-radius: 3px; text-align: center; font-size: 10px; line-height: 16px; color: #2d3c42; padding-top: 15px; display: flex; flex-direction: column; align-items: center; }
.fmt-on { border: 2px solid #3d4fff; padding-top: 14px; }
.a { height: 26px; line-height: 26px; display: flex; align-items: center; margin-bottom: 1px; color: #003642; }
.a1 { font-size: 14px; } .a2 { font-size: 18px; } .a3 { font-size: 23px; }
.tick { position: absolute; right: 6px; top: 6px; }

/* Floating layers */
.edge-shadow { position: absolute; z-index: 2; right: 0; top: 0; width: 18px; height: 100%; background: linear-gradient(90deg, rgba(0, 0, 0, 0), rgba(0, 0, 0, .065)); }
.summary-pill { position: absolute; z-index: 3; left: 948px; top: 346px; width: 110px; height: 37px; border-radius: 18px 18px 0 18px; background: linear-gradient(22deg, #d765f5 5%, #0a9df5 42%, #0a9df5 58%, #06d8d8 92%); box-shadow: 0 0 16px rgba(0, 20, 40, .12); color: #fff; font: 700 13.300px/36px "Noto Sans", sans-serif; display: flex; align-items: center; gap: 4px; padding: 0 0 1px 9px; white-space: nowrap; }

/* Dock */
.dockbar { height: 53px; background: linear-gradient(90deg, #120c08 0, #020202 2%, #020202 9%, #110d0a 12%, #020202 14%, #020202 18%, #110d0a 21%, #030303 24%, #0d0a08 29%, #020202 32%, #000 100%); display: flex; justify-content: center; padding-top: 1px; }
.dock { width: 416px; height: 48px; border: 1px solid #4a4a4a; border-radius: 15px; background: #0e0e0e; display: flex; align-items: center; padding-left: 1px; }
.di { position: relative; width: 46px; height: 42px; display: flex; align-items: center; justify-content: center; }
.di-on { width: 42px; margin: 0 2px; background: #3b3b3b; border-radius: 12px; }
.di-on::after, .di-run::after { content: ""; position: absolute; bottom: 0; left: 50%; margin-left: -2px; width: 4px; height: 4px; border-radius: 50%; background: #0b8457; }
.di-apps { width: 42px; }
.help { width: 24px; height: 24px; border-radius: 50%; background: linear-gradient(#2a86d8 50%, #3f9fe8 50%); color: #fff; font: 21px/24px "Noto Sans", sans-serif; text-align: center; }
```
